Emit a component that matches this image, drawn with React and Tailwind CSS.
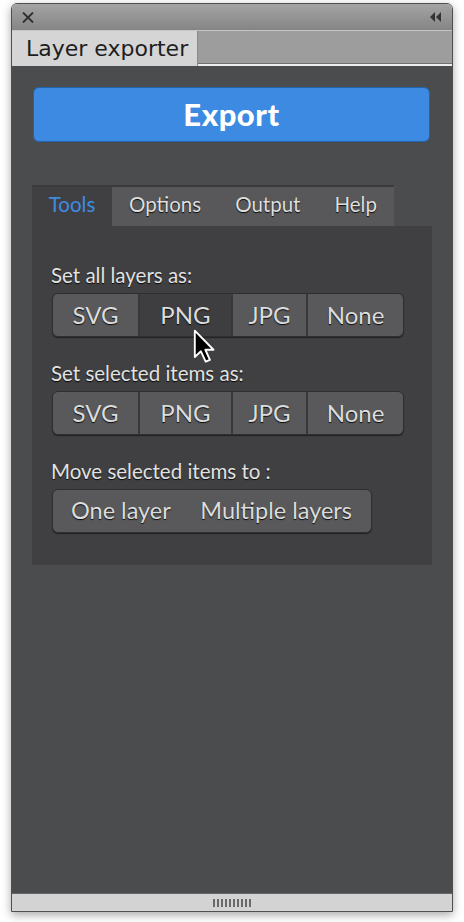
import React from "react";

const ui = { fontFamily: "Lato, 'Open Sans', sans-serif" };
const engraved = "[text-shadow:0_1px_1px_rgba(0,0,0,0.9)]";

function CloseIcon() {
  return (
    <svg width="12" height="11" viewBox="0 0 12 11" className="block">
      <path d="M1 0.5 L11 10.5 M11 0.5 L1 10.5" stroke="#2e2e2e" strokeWidth="1.8" />
    </svg>
  );
}

function CollapseIcon() {
  return (
    <svg width="12" height="10" viewBox="0 0 12 10" className="block">
      <path d="M5 0 L0 5 L5 10 Z M11 0 L6 5 L11 10 Z" fill="#333" />
    </svg>
  );
}

function Cursor() {
  return (
    <svg width="24" height="34" viewBox="0 0 14 20" className="block">
      <path
        d="M1 1 L1 16.5 L4.6 13.1 L7.4 19.2 L9.9 18.1 L7.2 12.2 L12 12.2 Z"
        fill="#000"
        stroke="#fff"
        strokeWidth="1.1"
        strokeLinejoin="round"
      />
    </svg>
  );
}

function Segmented({ items, pressed }) {
  return (
    <div className="flex h-[44px] w-fit rounded-[6px] border border-[#2f2f31] bg-[#59595b] shadow-[0_1px_1px_rgba(0,0,0,0.5)] overflow-hidden">
      {items.map((it, i) => (
        <div
          key={it.label}
          className={`flex items-center justify-center text-[24px] text-[#dcdcdc] ${engraved} ${
            i > 0 ? "border-l-2 border-[#38383a]" : ""
          } ${it.w} ${pressed === it.label ? "bg-[#3e3e40]" : ""}`}
        >
          {it.label}
        </div>
      ))}
    </div>
  );
}

const formats = [
  { label: "SVG", w: "w-[85px]" },
  { label: "PNG", w: "w-[93px]" },
  { label: "JPG", w: "w-[75px]" },
  { label: "None", w: "w-[97px]" },
];

export default function App() {
  return (
    <div className="min-h-screen bg-white relative pt-[3px] pl-[11px]" style={ui}>
      <div className="w-[442px] h-[909px] flex flex-col rounded-t-[6px] border border-[#505050] overflow-hidden shadow-[0_3px_10px_rgba(0,0,0,0.35)]">
        {/* title bar */}
        <div className="h-[26px] flex items-center justify-between pl-[10px] pr-[10px] bg-gradient-to-b from-[#a4a4a4] to-[#858585]">
          <CloseIcon />
          <CollapseIcon />
        </div>

        {/* panel tab strip */}
        <div className="h-[36px] flex border-t border-[#c4c4c4]">
          <div
            className="w-[186px] bg-[#d5d5d5] flex items-center pl-[14px] text-[22px] text-[#1e1e1e] border-r border-[#8a8a8a]"
            style={{ fontFamily: "'DejaVu Sans', sans-serif" }}
          >
            Layer exporter
          </div>
          <div className="flex-1 flex flex-col">
            <div className="flex-1 bg-[#9d9d9d]" />
            <div className="h-px bg-[#707070]" />
            <div className="h-[2px] bg-[#ededed]" />
          </div>
        </div>

        {/* content */}
        <div className="flex-1 bg-[#4b4c4e] px-[20px] pt-[21px]">
          <button className="ml-px w-[397px] h-[55px] rounded-[6px] bg-[#3c8ae2] border border-[#2463ad] text-white text-[31px] font-black tracking-[0.5px] flex items-center justify-center">
            Export
          </button>

          <div className="mt-[43px] w-[400px]">
            <div className="flex h-[41px] text-[20.5px] border-t-2 border-[#3a3a3c] w-fit">
              <div className="w-[80px] bg-[#404042] text-[#3d8ce2] flex items-center justify-center pb-[5px]">
                Tools
              </div>
              {["Options", "Output", "Help"].map((t) => (
                <div
                  key={t}
                  className={`px-[17px] bg-[#58585a] text-[#dedede] flex items-center pb-[5px] ${engraved}`}
                >
                  {t}
                </div>
              ))}
            </div>

            <div className="bg-[#404042] pt-[36px] pb-[32px] pl-[20px]">
              <div className={`h-[26px] leading-[26px] text-[20.5px] text-[#e2e2e2] -ml-px ${engraved}`}>
                Set all layers as:
              </div>
              <div className="mt-[5px]">
                <Segmented items={formats} pressed="PNG" />
              </div>

              <div className={`mt-[23px] h-[26px] leading-[26px] text-[20.5px] text-[#e2e2e2] -ml-px ${engraved}`}>
                Set selected items as:
              </div>
              <div className="mt-[5px]">
                <Segmented items={formats} />
              </div>

              <div className={`mt-[23px] h-[26px] leading-[26px] text-[20.5px] text-[#e2e2e2] -ml-px ${engraved}`}>
                Move selected items to :
              </div>
              <div className="mt-[5px] flex h-[44px] w-[320px] rounded-[6px] border border-[#2f2f31] bg-[#59595b] shadow-[0_1px_1px_rgba(0,0,0,0.5)] items-center justify-between pl-[18px] pr-[19px] text-[23.5px] text-[#dcdcdc]">
                <span className={engraved}>One layer</span>
                <span className={engraved}>Multiple layers</span>
              </div>
            </div>
          </div>
        </div>

        {/* bottom grip bar */}
        <div className="h-[18px] border-t border-[#666] bg-[#d3d3d3] flex items-center justify-center gap-[2px]">
          {Array.from({ length: 10 }).map((_, i) => (
            <div key={i} className="w-[2px] h-[8px] bg-[#6a6a6a]" />
          ))}
        </div>
      </div>

      <div className="absolute left-[193px] top-[329px]">
        <Cursor />
      </div>
    </div>
  );
}
